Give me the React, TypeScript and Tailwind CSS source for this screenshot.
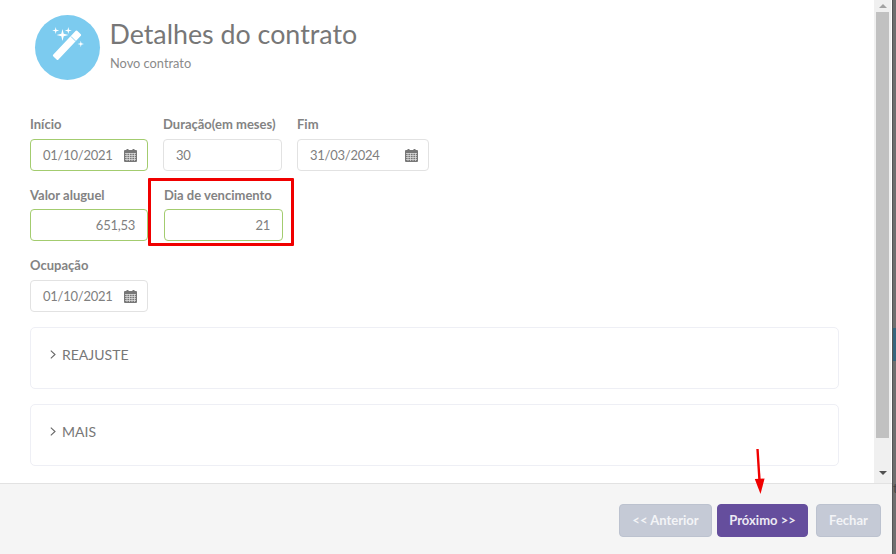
import type { ReactNode } from 'react';

function CalendarIcon() {
  return (
    <svg width="13" height="13" viewBox="0 0 13 13" className="shrink-0" fill="#777">
      <rect x="0" y="1" width="13" height="12" rx="1" />
      <rect x="2.5" y="0" width="2" height="2.5" />
      <rect x="8.5" y="0" width="2" height="2.5" />
      <path d="M1 4.5h11M1 6.5h11M1 8.5h11M1 10.5h11M3 4v8M5.5 4v8M8 4v8M10.5 4v8" stroke="#e4e4e4" strokeWidth="0.7" fill="none" />
    </svg>
  );
}

function Sparkle({ x, y, r }: { x: number; y: number; r: number }) {
  const k = r * 0.2;
  return (
    <path
      fill="#fff"
      d={`M${x} ${y - r}L${x + k} ${y - k}L${x + r} ${y}L${x + k} ${y + k}L${x} ${y + r}L${x - k} ${y + k}L${x - r} ${y}L${x - k} ${y - k}Z`}
    />
  );
}

function WandBadge() {
  return (
    <div className="w-[65px] h-[65px] rounded-full bg-[#7ccbef] shrink-0">
      <svg width="65" height="65" viewBox="0 0 65 65">
        <rect x="14.5" y="26.75" width="35" height="7" rx="1" fill="#fff" transform="rotate(-46.7 32 30.25)" />
        <path d="M36 21.5l5 5" stroke="#7ccbef" strokeWidth="0.9" />
        <Sparkle x={27.5} y={20} r={6} />
        <Sparkle x={20.7} y={15.5} r={3.5} />
        <Sparkle x={33.3} y={15.5} r={3.5} />
        <Sparkle x={45.8} y={29} r={3.2} />
      </svg>
    </div>
  );
}

function Field({
  label,
  width,
  value,
  ok,
  right,
  calendar,
  labelHeight = 'h-[23px]',
}: {
  label: string;
  width: string;
  value: string;
  ok?: boolean;
  right?: boolean;
  calendar?: boolean;
  labelHeight?: string;
}) {
  return (
    <div className={width}>
      <label className={`block ${labelHeight} text-[13px] leading-[16px] font-bold text-[#767676] whitespace-nowrap opacity-90`}>
        {label}
      </label>
      <div
        className={`h-[32px] flex items-center rounded-[4px] border bg-white pl-[12px] pr-[10px] text-[13px] tracking-[-0.25px] text-[#808080] ${
          ok ? 'border-[#a3cc6f]' : 'border-[#e2e2e2]'
        } ${right ? 'justify-end pr-[12px]' : 'justify-between'}`}
      >
        <span className="pt-[1px]">{value}</span>
        {calendar ? <CalendarIcon /> : null}
      </div>
    </div>
  );
}

function Section({ title }: { title: string }) {
  return (
    <div className="h-[62px] mt-[15px] rounded-[5px] border border-[#eeeff5] bg-white pl-[19px] pt-[16px]">
      <div className="flex items-center h-[20px] text-[14px] text-[#777]">
        <svg width="6" height="9" viewBox="0 0 6 9" className="mr-[6px]" fill="none" stroke="#666" strokeWidth="1.1">
          <path d="M0.8 0.6L5 4.5L0.8 8.4" />
        </svg>
        {title}
      </div>
    </div>
  );
}

function FooterButton({ children, primary, className }: { children: ReactNode; primary?: boolean; className: string }) {
  return (
    <button
      className={`h-[33px] rounded-[4px] border text-[13px] font-bold ${className} ${
        primary ? 'bg-[#654e9d] border-[#654e9d] text-[#ece9f4]' : 'bg-[#c5cad6] border-[#bcc2cf] text-[#f3f4f7]'
      }`}
    >
      {children}
    </button>
  );
}

export default function App() {
  return (
    <div className="relative w-[896px] h-[554px] overflow-hidden flex bg-[#6f6f6f] font-['Lato',sans-serif]">
      <div className="w-[892px] h-full flex flex-col bg-white shrink-0">
        <div className="h-[483px] flex overflow-hidden">
          <div className="flex-1 pl-[30px] pr-[35px]">
            <div className="flex h-[106px] pt-[15px] pl-[5px]">
              <WandBadge />
              <div className="ml-[10px] pt-[2px]">
                <h1 className="text-[26.8px] leading-[34px] text-[#777] -ml-[0.5px]">Detalhes do contrato</h1>
                <p className="mt-[4px] text-[12.8px] leading-[16px] text-[#8a8a8a]">Novo contrato</p>
              </div>
            </div>
            <div className="flex pt-[10px] gap-[15px]">
              <Field label="Início" width="w-[118px]" value="01/10/2021" ok calendar />
              <Field label="Duração(em meses)" width="w-[119px]" value="30" />
              <Field label="Fim" width="w-[132px]" value="31/03/2024" calendar />
            </div>
            <div className="flex mt-[16px] gap-[16px]">
              <Field label="Valor aluguel" width="w-[118px]" value="651,53" ok right labelHeight="h-[22px]" />
              <Field label="Dia de vencimento" width="w-[119px]" value="21" ok right labelHeight="h-[22px]" />
            </div>
            <div className="flex mt-[16px]">
              <Field label="Ocupação" width="w-[118px]" value="01/10/2021" calendar />
            </div>
            <Section title="REAJUSTE" />
            <Section title="MAIS" />
          </div>
          <div className="w-[17px] mr-[1px] h-full bg-[#f0f0f0] flex flex-col items-center">
            <div className="h-[12px] flex items-center justify-center">
              <div className="w-0 h-0 border-x-[4px] border-x-transparent border-b-[4px] border-b-[#a3a3a3]" />
            </div>
            <div className="w-[13px] h-[426px] bg-[#c1c1c1]" />
            <div className="flex-1 flex items-end pb-[8px]">
              <div className="w-0 h-0 border-x-[4px] border-x-transparent border-t-[4px] border-t-[#505050]" />
            </div>
          </div>
        </div>
        <div className="flex-1 border-t border-[#e2e2e2] bg-[#f5f5f5] flex items-start pt-[20px] pl-[619px]">
          <FooterButton className="w-[93px]">{'<< Anterior'}</FooterButton>
          <FooterButton primary className="w-[91px] ml-[5px]">{'Próximo >>'}</FooterButton>
          <FooterButton className="w-[65px] ml-[8px]">Fechar</FooterButton>
        </div>
      </div>
      {/* dimmed page showing behind the modal */}
      <div className="flex-1 flex flex-col border-l border-[#555] overflow-hidden">
        <div className="h-[328px] shrink-0" />
        <div className="h-[33px] shrink-0 bg-[#37657c]" />
        <div className="h-[120px] shrink-0" />
        <div className="h-[14px] shrink-0 text-[14px] leading-[14px] text-[#444]">t</div>
      </div>

      {/* annotations drawn over the screenshot */}
      <div className="absolute left-[148px] top-[178px] w-[146px] h-[68px] border-[3px] border-[#f00000] rounded-[1px]" />
      <svg className="absolute left-[750px] top-[446px]" width="20" height="52" viewBox="0 0 20 52">
        <path d="M7.5 3L9.6 36" stroke="#f00000" strokeWidth="2.4" />
        <path d="M4.8 33L14.6 32.5L10.5 48Z" fill="#f00000" />
      </svg>
    </div>
  );
}
